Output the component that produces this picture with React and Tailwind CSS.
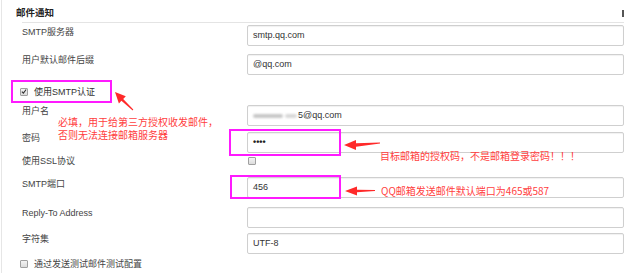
import React from "react";

const FONT = { fontFamily: '"Liberation Sans", "Noto Sans CJK SC", sans-serif' };
const CJK = { fontFamily: '"Noto Sans CJK SC", "Liberation Sans", sans-serif' };

function Box({ children, extra = "" }) {
  return (
    <div className={`flex-1 h-[21px] border border-[#cfcfcf] rounded-[2px] bg-white flex items-center pl-[5px] text-[9px] text-[#333] shadow-[inset_0_1px_1px_rgba(0,0,0,0.06)] ${extra}`}>
      {children}
    </div>
  );
}

function Row({ label, children, mt, pt = "pt-0" }) {
  return (
    <div className={`flex items-start ${mt}`}>
      <div className={`w-[247px] pl-[22px] text-[9px] leading-[12px] text-[#444] ${pt}`}>{label}</div>
      {children}
    </div>
  );
}

function CheckBox({ checked }) {
  return (
    <span className="w-[8px] h-[8px] border border-[#a0a0a0] rounded-[1px] bg-gradient-to-b from-[#f4f4f4] to-[#dcdcdc] flex items-center justify-center shrink-0">
      {checked && (
        <svg width="7" height="7" viewBox="0 0 7 7">
          <path d="M1 3.6 L2.8 5.4 L6 1.2" fill="none" stroke="#333" strokeWidth="1.3" />
        </svg>
      )}
    </span>
  );
}

export default function App() {
  return (
    <div className="relative w-[624px] h-[273px] bg-white overflow-hidden" style={FONT}>
      <div className="absolute left-[1px] top-0 h-full border-l border-[#e6e6e6]" />
      <div className="absolute left-[622px] top-[10px] w-[2px] h-[7px] bg-[#555]" />

      <div className="flex flex-col">
        <div className="h-[22px] pl-[16px] pt-[7px] text-[9.5px] leading-[12px] font-bold text-[#222]">邮件通知</div>
        <div className="ml-[22px] border-t border-[#e4e4e4]" />

        <Row label="SMTP服务器" mt="mt-[2px]" pt="pt-[1px]">
          <Box>smtp.qq.com</Box>
        </Row>

        <Row label="用户默认邮件后缀" mt="mt-[8px]">
          <Box>@qq.com</Box>
        </Row>

        <div className="mt-[5px] ml-[11px] w-[101px] h-[23px] border-2 border-[#ff1aff] flex items-center pl-[7px] gap-[6px]">
          <CheckBox checked />
          <span className="text-[9px] leading-[12px] text-[#333]">使用SMTP认证</span>
        </div>

        <Row label="用户名" mt="mt-[2px]">
          <Box>
            <span className="w-[30px] h-[4px] bg-[#c8c8c8] blur-[1px] rounded-full" />
            <span className="w-[12px] h-[4px] ml-[2px] bg-[#d8d8d8] blur-[1px] rounded-full" />
            <span className="ml-[1px]">5@qq.com</span>
          </Box>
        </Row>

        <Row label="密码" mt="mt-[6px]">
          <Box>
            <span className="text-[9px] font-bold text-[#222]">••••</span>
          </Box>
        </Row>

        <div className="mt-[1px] h-[14px] flex items-center">
          <div className="w-[248px] pl-[22px] text-[9px] leading-[12px] text-[#444]">使用SSL协议</div>
          <CheckBox />
        </div>

        <Row label="SMTP端口" mt="mt-[9px]" pt="pt-[1px]">
          <Box>456</Box>
        </Row>

        <Row label="Reply-To Address" mt="mt-[9px]">
          <Box />
        </Row>

        <Row label="字符集" mt="mt-[5px]">
          <Box>UTF-8</Box>
        </Row>

        <div className="mt-[3px] h-[14px] flex items-center pl-[20px] gap-[6px]">
          <CheckBox />
          <span className="text-[9px] leading-[12px] text-[#444]">通过发送测试邮件测试配置</span>
        </div>
      </div>

      {/* annotation boxes */}
      <div className="absolute left-[229px] top-[129px] w-[112px] h-[27px] border-2 border-[#ff1aff]" />
      <div className="absolute left-[230px] top-[175px] w-[111px] h-[24px] border-2 border-[#ff1aff]" />

      {/* annotation texts */}
      <div className="absolute left-[58px] top-[115px] text-[10px] leading-[13px] text-[#ff4040] whitespace-nowrap" style={CJK}>
        必填，用于给第三方授权收发邮件，<br />否则无法连接邮箱服务器
      </div>
      <div className="absolute left-[380px] top-[149px] text-[10px] leading-[13px] text-[#ff4040] whitespace-nowrap" style={CJK}>
        目标邮箱的授权码，不是邮箱登录密码！！！
      </div>
      <div className="absolute left-[381px] top-[184px] text-[10px] leading-[13px] text-[#ff4040] whitespace-nowrap" style={CJK}>
        QQ邮箱发送邮件默认端口为465或587
      </div>

      {/* arrows */}
      <svg className="absolute left-0 top-0" width="624" height="273" viewBox="0 0 624 273">
        <path d="M115 92 L118.9 103.5 L121.4 100.8 L132.7 110.4 L133.3 109.6 L123.2 99 L125.8 96.2 Z" fill="#ff2a2a" />
        <path d="M344 145 L356 140 L356 143.3 L380 142.4 L380 143.4 L356 146.7 L356 150 Z" fill="#ff2a2a" />
        <path d="M345 191 L357 186.5 L357 189.8 L375 190 L375 191 L357 192.2 L357 195.5 Z" fill="#ff2a2a" />
      </svg>
    </div>
  );
}
